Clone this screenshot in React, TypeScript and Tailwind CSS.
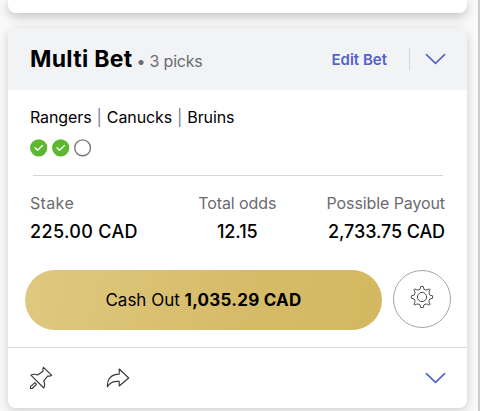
import { clsx } from "clsx";

const picks = ["Rangers", "Canucks", "Bruins"];

function Chevron() {
  return (
    <svg width="21" height="12" viewBox="0 0 21 12" fill="none" stroke="#5262c8" strokeWidth="1.6" strokeLinecap="round" strokeLinejoin="round">
      <path d="M1.4 1.6 L10.5 10.3 L19.6 1.6" />
    </svg>
  );
}

function WonDot() {
  return (
    <svg width="18" height="18" viewBox="0 0 18 18" fill="none">
      <circle cx="8.7" cy="8.8" r="8.6" fill="#5cb82f" />
      <path d="M5 8.8 L7.5 11.2 L12.5 6.6" stroke="#fff" strokeWidth="1.4" strokeLinecap="round" strokeLinejoin="round" />
    </svg>
  );
}

function OpenDot() {
  return (
    <svg width="18" height="18" viewBox="0 0 18 18" fill="none">
      <circle cx="8.6" cy="8.8" r="7.9" stroke="#77777b" strokeWidth="1.4" />
    </svg>
  );
}

function GearIcon() {
  return (
    <svg width="24" height="24" viewBox="0 0 24 24" fill="none" stroke="#4b4b50" strokeWidth="1" strokeLinejoin="round">
      <circle cx="12" cy="12" r="4.6" />
      <path d="M10.8 1.4 H13.2 L14 4.3 Q16 5.4 17.4 4.8 L19.3 3.9 L20.1 4.7 L19.2 6.6 Q18.6 8 19.7 10 L22.6 10.8 V13.2 L19.7 14 Q18.6 16 19.2 17.4 L20.1 19.3 L19.3 20.1 L17.4 19.2 Q16 18.6 14 19.7 L13.2 22.6 H10.8 L10 19.7 Q8 18.6 6.6 19.2 L4.7 20.1 L3.9 19.3 L4.8 17.4 Q5.4 16 4.3 14 L1.4 13.2 V10.8 L4.3 10 Q5.4 8 4.8 6.6 L3.9 4.7 L4.7 3.9 L6.6 4.8 Q8 5.4 10 4.3 Z" />
    </svg>
  );
}

function PinIcon() {
  return (
    <svg width="24" height="24" viewBox="0 0 24 24" fill="none" stroke="#35353a" strokeWidth="1.1" strokeLinejoin="round" strokeLinecap="round">
      <path d="M14.5 1.3 L22.7 9.3 Q20.8 10.6 18.9 9.9 L14.7 14.8 Q16.5 19 14.8 22 L1.9 9.1 Q5 7.5 8.6 9 L14.1 5.2 Q13.3 3.2 14.5 1.3 Z" />
      <path d="M5.9 16.7 L1.5 20.6 V22.5 H3.2 L7.4 18.4 Z" />
    </svg>
  );
}

function ShareIcon() {
  return (
    <svg width="24" height="20" viewBox="0 0 24 20" fill="none" stroke="#35353a" strokeWidth="1.1" strokeLinejoin="round">
      <path d="M13.2 1 L22.7 10 L13.2 18 V13.4 Q4.6 12.8 1.4 18.8 Q0.9 6.6 13.2 6.1 Z" />
    </svg>
  );
}

function Stat({ label, value, className }: { label: string; value: string; className?: string }) {
  return (
    <div className={clsx("flex flex-col whitespace-nowrap", className)}>
      <span className="text-[16px] leading-6 text-[#6b6b6f]">{label}</span>
      <span className="mt-[5px] text-[18px] leading-6 font-medium text-black">{value}</span>
    </div>
  );
}

export default function App() {
  return (
    <div className="h-[411px] w-[480px] overflow-hidden border-r-2 border-[#c9ccd1] bg-[#fafafa] pl-2 font-['Inter','Liberation_Sans',sans-serif]">
      <div className="h-[13px] w-[459px] rounded-b-lg bg-white shadow-[0_3px_12px_rgba(0,0,0,0.25)]" />

      <div className="mt-[15px] flex h-[380px] w-[459px] flex-col overflow-hidden rounded-lg bg-white shadow-[0_3px_12px_rgba(0,0,0,0.18)]">
        <header className="flex h-[62px] shrink-0 items-center bg-[#f2f3f5] pr-[21px] pl-[22px]">
          <h2 className="text-[23px] leading-8 font-bold tracking-[0.3px] text-black">Multi Bet</h2>
          <span className="mt-1 ml-1 text-[16px] tracking-[-0.2px] text-[#6b6b6f]">• 3 picks</span>
          <button className="mt-0.5 ml-auto text-[15px] font-semibold text-[#5262c8]">Edit Bet</button>
          <span className="mr-[15px] ml-[22px] h-[22px] w-px bg-[#d5d6da]" />
          <Chevron />
        </header>

        <section className="px-[22px] pt-[15px]">
          <p className="flex gap-[5px] text-[16px] leading-6 tracking-[-0.1px] text-black">
            {picks.map((pick, i) => (
              <span key={pick} className="flex gap-[5px]">
                {i > 0 && <span className="text-[#7b8190]">|</span>}
                {pick}
              </span>
            ))}
          </p>
          <div className="mt-[10px] flex gap-1">
            <WonDot />
            <WonDot />
            <OpenDot />
          </div>
          <div className="mr-0.5 mt-[18px] ml-[3px] h-px bg-[#d6d6d8]" />
          <div className="mt-[15px] flex justify-between">
            <Stat label="Stake" value="225.00 CAD" className="w-[108px] tracking-[0.35px]" />
            <Stat label="Total odds" value="12.15" className="ml-[10px] items-center tracking-[-0.1px]" />
            <Stat label="Possible Payout" value="2,733.75 CAD" className="items-end tracking-[-0.1px]" />
          </div>
        </section>

        <div className="mt-[26px] flex items-center pl-[17px]">
          <button className="h-[60px] w-[357px] rounded-full bg-linear-[105deg,#dfc881,#d6bc68_60%,#d3b861] pt-0.5 text-[17px] text-black">
            Cash Out <span className="font-bold tracking-[0.25px]">1,035.29 CAD</span>
          </button>
          <button className="ml-[11px] flex size-[58px] -translate-y-px items-center justify-center rounded-full border border-[#a6a6a8] pb-1">
            <GearIcon />
          </button>
        </div>

        <footer className="mt-auto flex h-[61px] items-center border-t border-[#dcdcdf] pr-[21px] pl-[21px]">
          <PinIcon />
          <span className="ml-[53px]">
            <ShareIcon />
          </span>
          <span className="ml-auto">
            <Chevron />
          </span>
        </footer>
      </div>
    </div>
  );
}
